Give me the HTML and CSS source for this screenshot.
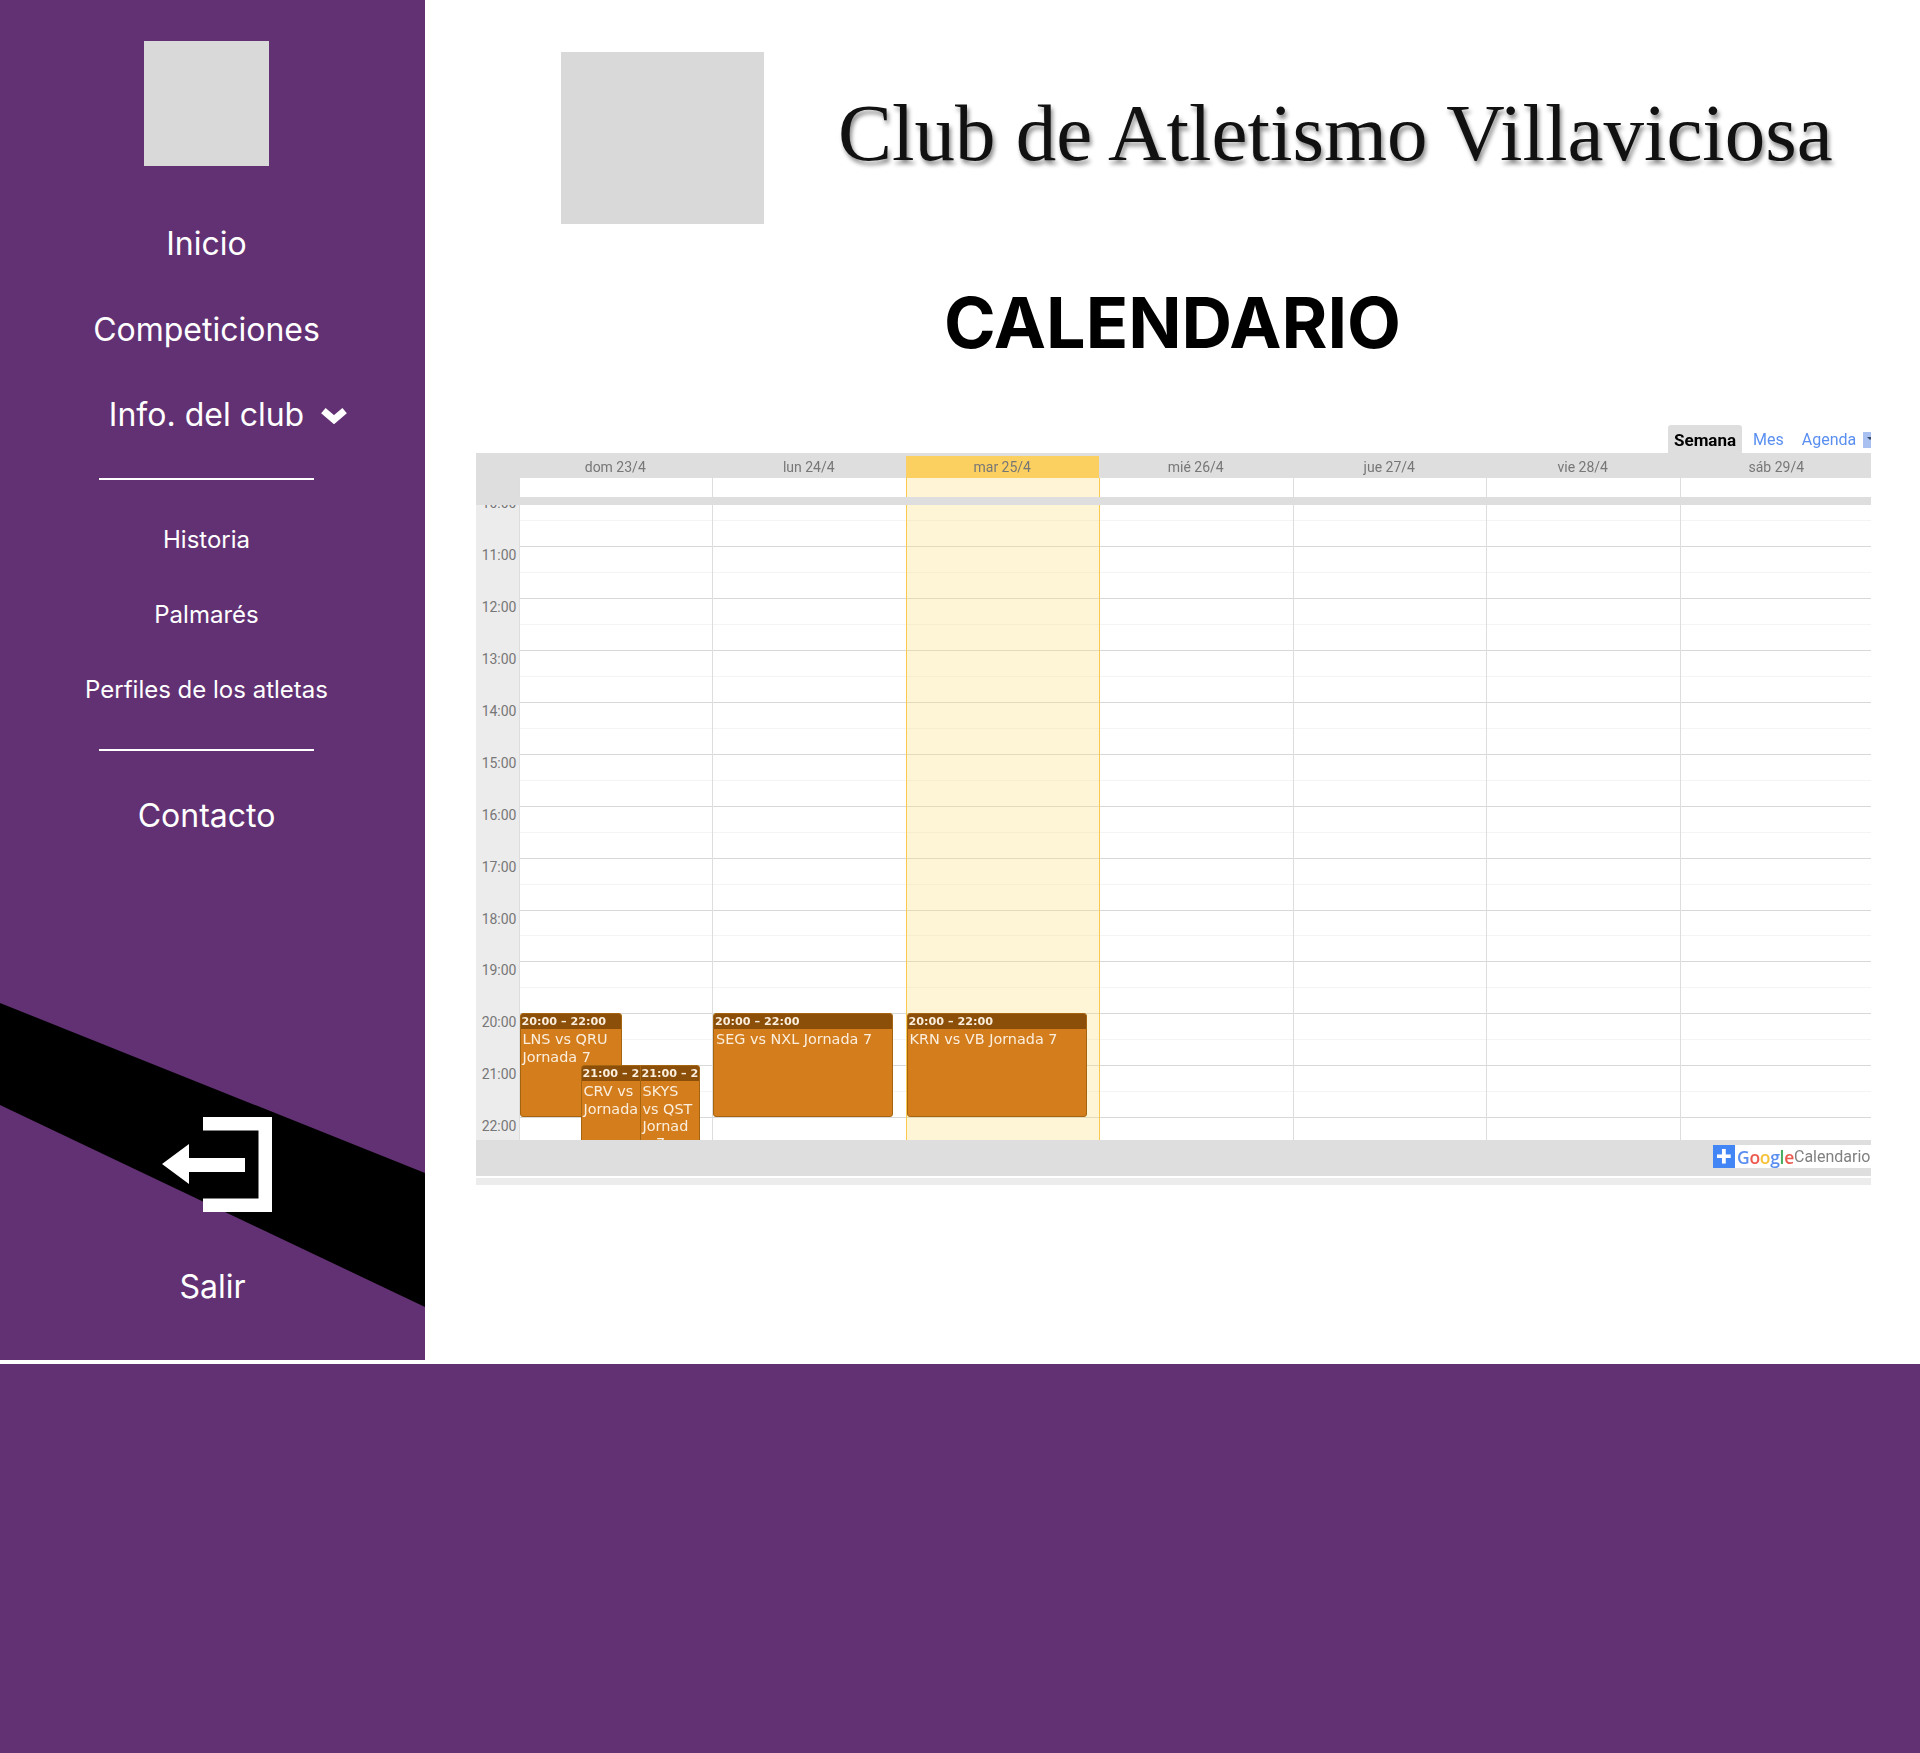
FILE: index.html
```html
<!DOCTYPE html>
<html lang="es">
<head>
    <meta charset="UTF-8">
    <title>Calendario</title>
    <link rel="stylesheet" href="styles.css">
</head>
<body>
<div class="top">
    <aside class="side">
        <div class="band"></div>
        <div class="side-logo"></div>
        <nav class="nav">
            <a href="#">Inicio</a>
            <a href="#">Competiciones</a>
            <a href="#"><span class="drop">Info. del club
                <svg class="chev" viewBox="0 0 26 16"><polyline points="3,3.5 13,12 23,3.5"/></svg>
            </span></a>
        </nav>
        <div class="rule"></div>
        <nav class="subnav">
            <a href="#">Historia</a>
            <a href="#">Palmarés</a>
            <a href="#">Perfiles de los atletas</a>
        </nav>
        <div class="rule"></div>
        <nav class="nav">
            <a href="#">Contacto</a>
        </nav>
        <a class="exit" href="#">
            <svg class="exit-icon" viewBox="0 0 110 95">
                <polygon points="41,0 110,0 110,95 41,95 41,81.5 96.5,81.5 96.5,13.5 41,13.5"/>
                <polygon points="0,47 27,27 27,41 83,41 83,55 27,55 27,67"/>
            </svg>
            <span>Salir</span>
        </a>
    </aside>
    <main class="main">
        <header class="head">
            <div class="head-logo"></div>
            <div class="head-title">Club de Atletismo Villaviciosa</div>
        </header>
        <h1 class="title">CALENDARIO</h1>
        <section class="cal">
            <div class="cal-tabs">
                <span class="tab on">Semana</span>
                <span class="tab">Mes</span>
                <span class="tab">Agenda</span>
                <span class="tab-arrow"></span>
            </div>
            <div class="cal-head">
                <div class="cal-corner"></div>
                <div class="day-name">dom 23/4</div>
                <div class="day-name">lun 24/4</div>
                <div class="day-name today-name">mar 25/4</div>
                <div class="day-name">mié 26/4</div>
                <div class="day-name">jue 27/4</div>
                <div class="day-name">vie 28/4</div>
                <div class="day-name">sáb 29/4</div>
            </div>
            <div class="cal-allday">
                <div class="cal-corner"></div>
                <div class="allday-cell"></div>
                <div class="allday-cell"></div>
                <div class="allday-cell today"></div>
                <div class="allday-cell"></div>
                <div class="allday-cell"></div>
                <div class="allday-cell"></div>
                <div class="allday-cell"></div>
            </div>
            <div class="cal-bar"></div>
            <div class="cal-body">
                <div class="cal-grid">
                    <div class="hours">
                        <div>10:00</div>
                        <div>11:00</div>
                        <div>12:00</div>
                        <div>13:00</div>
                        <div>14:00</div>
                        <div>15:00</div>
                        <div>16:00</div>
                        <div>17:00</div>
                        <div>18:00</div>
                        <div>19:00</div>
                        <div>20:00</div>
                        <div>21:00</div>
                        <div>22:00</div>
                    </div>
                    <div class="day">
                        <div class="ev ev-lns">
                            <div class="ev-time">20:00 – 22:00</div>
                            <div class="ev-text">LNS vs QRU<br>Jornada 7</div>
                        </div>
                        <div class="ev ev-crv">
                            <div class="ev-time">21:00 – 22:00</div>
                            <div class="ev-text">CRV vs<br>Jornada</div>
                        </div>
                        <div class="ev ev-skys">
                            <div class="ev-time">21:00 – 22:00</div>
                            <div class="ev-text">SKYS<br>vs QST<br>Jornad<br>a 7</div>
                        </div>
                    </div>
                    <div class="day">
                        <div class="ev ev-full">
                            <div class="ev-time">20:00 – 22:00</div>
                            <div class="ev-text">SEG vs NXL Jornada 7</div>
                        </div>
                    </div>
                    <div class="day today">
                        <div class="ev ev-full">
                            <div class="ev-time">20:00 – 22:00</div>
                            <div class="ev-text">KRN vs VB Jornada 7</div>
                        </div>
                    </div>
                    <div class="day"></div>
                    <div class="day"></div>
                    <div class="day"></div>
                    <div class="day"></div>
                </div>
            </div>
            <div class="cal-foot">
                <div class="gcal">
                    <span class="gcal-plus">+</span>
                    <span class="gcal-logo"><b class="g-b">G</b><b class="g-r">o</b><b class="g-y">o</b><b class="g-b">g</b><b class="g-g">l</b><b class="g-r">e</b></span>
                    <span class="gcal-name">Calendario</span>
                </div>
            </div>
            <div class="cal-end"></div>
        </section>
    </main>
</div>
<footer class="foot"></footer>
</body>
</html>
```
FILE: styles.css
```css
*{box-sizing:border-box;}
body{margin:0;min-height:1753px;display:flex;flex-direction:column;background:#fff;font-family:Inter,"Liberation Sans",sans-serif;}
a{color:#fff;text-decoration:none;}

.top{display:flex;height:1364px;}
.foot{flex:1;background:#623173;}

/* sidebar */
.side{position:relative;width:425px;height:1360px;flex:none;background:#623173;display:flex;flex-direction:column;align-items:center;padding:41px 12px 0 0;overflow:hidden;}
.band{position:absolute;left:0;top:1003px;width:425px;height:304px;background:#000;clip-path:polygon(0 0,100% 170px,100% 100%,0 102px);}
.side-logo{width:125px;height:125px;background:#d9d9d9;margin-bottom:35px;}
.nav,.subnav{position:relative;width:100%;text-align:center;}
.nav a{display:block;height:85.5px;line-height:85.5px;font-size:32px;}
.subnav{margin-bottom:2px;}
.subnav a{display:block;height:75px;line-height:75px;font-size:24px;}
.drop{position:relative;}
.chev{position:absolute;left:100%;top:12px;width:28px;height:17px;margin-left:16px;fill:none;stroke:#fff;stroke-width:6.5;}
.rule{width:215px;height:2px;background:#fff;margin:20px 0 22px;flex:none;}
.exit{position:relative;margin:auto 0 0 12px;padding-bottom:53px;display:flex;flex-direction:column;align-items:center;font-size:32px;line-height:40px;}
.exit-icon{width:110px;height:95px;fill:#fff;margin:0 0 55px 9px;}

/* main */
.main{flex:1;padding-top:51px;}
.head{display:flex;align-items:center;margin-left:136px;height:173px;}
.head-logo{width:203px;height:172px;background:#d9d9d9;}
.head-title{margin:-8px 0 0 74px;font-family:"Liberation Serif",serif;font-size:81px;white-space:nowrap;color:#111;text-shadow:2px 4px 4px rgba(0,0,0,.45);}
.title{margin:59px 0 0;height:80px;line-height:80px;text-align:center;font-size:70px;font-weight:700;color:#000;}

/* calendar */
.cal{width:1395px;margin:62px 0 0 51px;font-family:Roboto,"Liberation Sans",sans-serif;filter:blur(.3px);overflow:hidden;}
.cal-tabs{display:flex;height:28px;padding-left:1192px;font-size:16px;line-height:30px;color:#5a8ff0;white-space:nowrap;}
.tab{padding:0 6px;margin-right:6px;}
.tab.on{width:74px;margin-right:5px;background:#dedede;color:#000;font-size:17px;font-weight:700;border-radius:3px 3px 0 0;}
.tab-arrow{position:relative;width:10px;height:16px;margin:7px 0 0 -5px;background:#a9c1f0;flex:none;}
.tab-arrow:after{content:"";position:absolute;right:0;top:5px;border:3px solid transparent;border-top-color:#3a4a6a;border-bottom:0;}
.cal-head,.cal-allday{display:grid;grid-template-columns:42.5px repeat(7,193.5px);background:#dedede;}
.cal-head{height:25px;}
.day-name{padding-top:4px;text-align:center;font-size:14px;line-height:21px;color:#777;}
.today-name{margin-top:3px;padding-top:1px;background:#fcd060;}
.cal-allday{height:19px;}
.allday-cell{background:#fff;border-left:1px solid #ddd;}
.cal-bar{height:8px;background:#dedede;}
.cal-body{height:635px;overflow:hidden;}
.cal-grid{display:grid;grid-template-columns:42.5px repeat(7,193.5px);height:676px;margin-top:-11px;background:repeating-linear-gradient(to bottom,#d8d8d8 0,#d8d8d8 1px,#fff 1px,#fff 25.97px,#f4f4f4 25.97px,#f4f4f4 26.97px,#fff 26.97px,#fff 51.94px);}
.hours{background:#ececec;font-size:14px;color:#777;text-align:right;padding-right:2px;}
.hours div{height:51.94px;line-height:18px;}
.day{position:relative;border-left:1px solid #ddd;}
.day.today{background:rgba(253,225,140,.35);border-left-color:#fcc94f;}
.allday-cell.today{background:#fff4d6;border-left-color:#fcc94f;}
.today + .day,.today + .allday-cell{border-left-color:#fcc94f;}

.ev{position:absolute;top:519.4px;height:104px;background:#d37d1c;border:1px solid #a5640f;border-radius:3px;overflow:hidden;color:#fbeedd;font-family:"DejaVu Sans",sans-serif;white-space:nowrap;}
.ev-time{height:16px;margin:-1px -1px 0;padding-left:2px;background:#8b4f09;font-size:11.2px;font-weight:700;line-height:17px;}
.ev-text{padding:2px 2px;font-size:14.4px;line-height:17.3px;}
.ev-full{left:0;width:180px;}
.ev-lns{left:0;width:102px;}
.ev-crv{top:571.3px;left:61px;width:60px;height:110px;border-radius:3px 0 0 0;}
.ev-skys{top:571.3px;left:120px;width:60px;height:110px;border-radius:0 3px 0 0;}

.cal-foot{height:36px;padding-top:5px;background:#dedede;display:flex;justify-content:flex-end;}
.gcal{display:flex;height:23px;width:158px;background:#fff;align-items:center;}
.gcal-plus{width:22px;height:23px;background:#4285f4;color:#fff;text-align:center;font-size:28px;font-weight:700;line-height:23px;}
.gcal-logo{margin-left:2px;font-family:"Open Sans",sans-serif;font-size:17.5px;letter-spacing:-.3px;}
.gcal-logo b{font-weight:600;}
.g-b{color:#5a8ff0;}
.g-r{color:#ec5a4f;}
.g-y{color:#f5c33b;}
.g-g{color:#45ad5e;}
.gcal-name{margin-left:0;font-size:16px;color:#808080;}
.cal-end{height:7px;margin-top:2px;background:#ececec;}
```
